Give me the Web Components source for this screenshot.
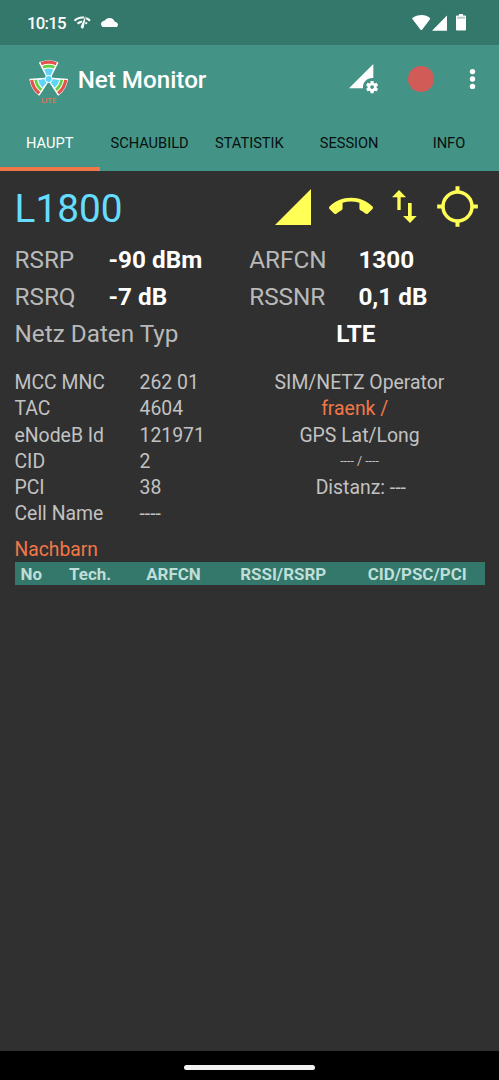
<!DOCTYPE html>
<html lang="de">
<head>
<meta charset="utf-8">
<title>Net Monitor</title>
<style>
html,body{margin:0;height:100%;background:#303030}
body{font-family:Roboto,"Noto Sans",sans-serif;overflow:hidden}
</style>
</head>
<body>
<net-monitor></net-monitor>
<script>
function define(name, html) {
  const t = document.createElement('template');
  t.innerHTML = html;
  customElements.define(name, class extends HTMLElement {
    constructor() {
      super();
      this.attachShadow({ mode: 'open' }).appendChild(t.content.cloneNode(true));
    }
  });
}

define('status-bar', `
<style>
:host{display:flex;height:45px;box-sizing:border-box;padding:0 33.5px 0 27px;background:#34786b;color:#fff;align-items:flex-start}
.time{font:500 16.8px/20px Roboto,sans-serif;margin-top:13px;width:46px;letter-spacing:-.75px;white-space:nowrap}
svg{fill:#fff;display:block;flex:none}
.grow{flex:1}
</style>
<span class="time">10:15</span>
<svg style="margin-top:13.3px" width="18.5" height="18.5" viewBox="0 0 24 24"><path d="M15.9 5c-.17 0-.32.09-.41.23l-.07.15-5.18 11.65c-.16.29-.26.61-.26.96 0 1.11.9 2.01 2.01 2.01.96 0 1.77-.68 1.96-1.59l.01-.03L16.4 5.5c0-.28-.22-.5-.5-.5zM1 9l2 2c2.88-2.88 6.79-4.08 10.53-3.62l1.19-2.68C9.89 3.84 4.74 5.27 1 9zm20 2l2-2c-1.64-1.64-3.55-2.82-5.59-3.57l-.53 2.82c1.5.62 2.9 1.53 4.12 2.75zm-4 4l2-2c-.8-.8-1.7-1.42-2.66-1.89l-.55 2.92c.42.27.83.59 1.21.97zM5 13l2 2c1.13-1.13 2.56-1.79 4.03-2l1.28-2.88c-2.63-.08-5.3.87-7.31 2.88z"/></svg>
<svg style="margin:17.5px 0 0 9px" width="17" height="9.8" viewBox="0 4 24 16" preserveAspectRatio="none"><path d="M19.35 10.04C18.67 6.59 15.64 4 12 4 9.11 4 6.6 5.64 5.35 8.04 2.34 8.36 0 10.91 0 14c0 3.31 2.69 6 6 6h13c2.76 0 5-2.24 5-5 0-2.64-2.05-4.78-4.65-4.96z"/></svg>
<span class="grow"></span>
<svg style="margin-top:14.7px" width="18.6" height="15.8" viewBox=".36 3 23.28 18.5" preserveAspectRatio="none"><path d="M12.01 21.49L23.64 7c-.45-.34-4.93-4-11.64-4C5.28 3 .81 6.66.36 7l11.63 14.49.01.01.01-.01z"/></svg>
<svg style="margin:14.8px 0 0 1.3px" width="15.6" height="15.8" viewBox="0 0 10 10" preserveAspectRatio="none"><path d="M0 10L10 0V10z"/></svg>
<svg style="margin:14.2px 0 0 8.3px" width="10" height="16.4" viewBox="0 0 10 16.4"><path d="M3 0h4v1.6h2q1 0 1 1v12.8q0 1-1 1H1q-1 0-1-1V2.600q0-1 1-1h2z"/><path fill="#b3cec9" d="M1 2.700h8v2H1z"/></svg>
`);

define('app-logo', `
<style>
:host{display:block;width:40px;height:44px}
svg{display:block;overflow:visible}
text{font:500 7.4px Roboto,sans-serif;fill:#e2774e;letter-spacing:.15px}
</style>
<svg width="40" height="44" viewBox="-20 -20 40 44">
<defs><g id="blade">
<path d="M-2 -3L-8.700 -16.200Q0 -19.600 8.700 -16.200L2 -3Z" fill="#fff" stroke="#fff" stroke-width="1.800" stroke-linejoin="round"/>
<path d="M-7.600 -15.300Q0 -18.300 7.600 -15.300" fill="none" stroke="#e4524d" stroke-width="3.200"/>
<path d="M-5.700 -11.700Q0 -14 5.700 -11.700" fill="none" stroke="#63cf40" stroke-width="2.800"/>
<path d="M-1.800 -3L-4.500 -9.600Q0 -11.200 4.500 -9.600L1.800 -3Z" fill="#5fd4f6"/>
</g></defs>
<g transform="translate(-.3 0)"><use href="#blade"/><use href="#blade" transform="rotate(120)"/><use href="#blade" transform="rotate(240)"/>
<circle r="3.600" fill="#5fd4f6" stroke="#fff" stroke-width="1"/>
<text x="0" y="23.600" text-anchor="middle">LITE</text></g>
</svg>`);

define('app-bar', `
<style>
:host{display:flex;height:70px;box-sizing:border-box;padding:0 23px 0 28.500px;background:#439486;align-items:center;color:#fff}
app-logo{margin-top:1px}
h1{flex:1;margin:0 0 0 9.200px;font:500 24.200px/30px Roboto,sans-serif;white-space:nowrap}
svg{display:block;flex:none;margin-top:-2px}
</style>
<app-logo></app-logo>
<h1><slot></slot></h1>
<svg style="margin-right:30px" width="29.200" height="29.200" viewBox="0 0 24 24" fill="#fff"><path d="M18.990 11.500c.34 0 .67.03 1 .07L20 0 0 20h11.560c-.04-.33-.07-.66-.07-1 0-4.140 3.360-7.500 7.500-7.500zm3.710 7.990c.02-.16.04-.32.04-.49 0-.17-.01-.33-.04-.49l1.060-.83c.09-.08.12-.21.06-.32l-1-1.730c-.06-.11-.19-.15-.31-.11l-1.240.5c-.26-.2-.54-.37-.85-.49l-.19-1.320c-.01-.12-.12-.21-.24-.21h-2c-.12 0-.23.09-.25.21l-.19 1.320c-.3.13-.59.29-.85.49l-1.240-.5c-.11-.04-.24 0-.31.11l-1 1.730c-.06.11-.04.24.06.32l1.060.83c-.02.16-.03.32-.03.49 0 .17.01.33.03.49l-1.060.83c-.09.08-.12.21-.06.32l1 1.730c.06.11.19.15.31.11l1.240-.5c.26.2.54.37.85.49l.19 1.320c.02.12.12.21.25.21h2c.12 0 .23-.09.25-.21l.19-1.320c.3-.13.59-.29.84-.49l1.250.5c.11.04.24 0 .31-.11l1-1.730c.06-.11.03-.24-.06-.32l-1.070-.83zm-3.710 1.010c-.83 0-1.500-.67-1.500-1.500s.67-1.500 1.500-1.500 1.500.67 1.500 1.500-.67 1.500-1.500 1.500z"/></svg>
<svg style="margin-right:34.700px" width="26" height="26" viewBox="0 0 26 26"><circle cx="13" cy="13" r="13" fill="#d05b57"/></svg>
<svg width="7" height="22" viewBox="0 0 7 22" fill="#fff"><circle cx="3.500" cy="3.600" r="2.700"/><circle cx="3.500" cy="11" r="2.700"/><circle cx="3.500" cy="18.400" r="2.700"/></svg>
`);

define('app-tab', `
<style>
:host{display:flex;flex:1 1 0;align-items:center;justify-content:center;box-sizing:border-box;height:56px;padding:3px .300px 0 0;border-bottom:4px solid transparent;font-size:14.600px;color:#06100e;white-space:nowrap}
:host([active]){color:#fff;border-bottom-color:#f27748}
</style><slot></slot>`);

define('tab-strip', `<style>:host{display:flex;height:56px;background:#439486}</style><slot></slot>`);

define('cell-icons', `
<style>
:host{display:flex;align-items:center;height:46px;color:#ffff55}
svg{display:block;fill:currentColor;flex:none}
</style>
<svg style="margin-top:-2px" width="36" height="36" viewBox="0 0 36 36"><path d="M0 36L36 0V36z"/></svg>
<svg style="margin:-2.600px 0 0 18px" width="44" height="44" viewBox="0 0 24 24"><path d="M12 9c-1.600 0-3.150.25-4.600.72v3.100c0 .39-.23.74-.56.9-.98.49-1.870 1.120-2.660 1.850-.18.18-.43.28-.7.28-.28 0-.53-.11-.71-.29L.29 13.080c-.18-.17-.29-.42-.29-.7 0-.28.11-.53.29-.71C3.340 8.780 7.460 7 12 7s8.660 1.780 11.710 4.670c.18.18.29.43.29.71 0 .28-.11.53-.29.71l-2.480 2.480c-.18.18-.43.29-.71.29-.27 0-.52-.11-.7-.28-.79-.74-1.690-1.360-2.670-1.850-.33-.16-.56-.5-.56-.9v-3.100C15.150 9.250 13.600 9 12 9z"/></svg>
<svg style="margin:-2.600px 0 0 19px" width="24.700" height="33" viewBox="396 45 74 99"><path d="M417 45L438 67H422V105H412V67H396zM444 84H455V123H470L450 144L429 123H444z"/></svg>
<svg style="margin:-2.600px 0 0 20.300px" width="41" height="41" viewBox="-61.500 -61.500 123 123"><circle r="43.500" fill="none" stroke="currentColor" stroke-width="10.500"/><path d="M-6-61H6V-44H-6zM-6 44H6V61H-6zM-61-6H-44V6H-61zM44-6H61V6H44z"/></svg>
`);

define('metric-row', `
<style>
:host{display:grid;grid-template-columns:94px 140.700px 109.200px 1fr;height:37.100px;align-items:center;font-size:24.300px;line-height:37px;color:#b9b9b9;white-space:nowrap}
:host([wide]){grid-template-columns:321.700px 1fr}
::slotted(b){font-weight:700;color:#fff}
</style><slot></slot>`);

define('info-grid', `
<style>
:host{display:grid;grid-template-columns:125px 1fr;grid-auto-rows:26.250px;font-size:19.400px;line-height:26.250px;color:#c2c2c2;white-space:nowrap}
</style><slot></slot>`);

define('info-center', `
<style>
:host{display:grid;grid-auto-rows:26.250px;font-size:19.400px;line-height:26.250px;color:#c2c2c2;text-align:center;white-space:pre}
::slotted(.accent){color:#f27748}
::slotted(.small){font-size:12.400px;line-height:24px}
::slotted(.distance){padding-left:2.500px}
</style><slot></slot>`);

define('neighbor-table', `
<style>
:host{display:block;color:#bfded8}
.title{font-size:19.300px;line-height:24px;color:#f27748}
.head{display:grid;grid-template-columns:48.500px 77.200px 94px 127.500px 1fr;padding-left:6px;height:22.700px;line-height:24px;background:#34786b;font-size:16.950px;font-weight:700;white-space:nowrap}
</style>
<div class="title"><slot name="title"></slot></div>
<div class="head"><slot></slot></div>`);

define('nav-pill', `
<style>:host{display:flex;justify-content:center;height:29px;background:#000;box-sizing:border-box;padding-top:14.200px}
i{width:131px;height:5px;border-radius:3px;background:#f2f2f2}</style><i></i>`);

define('net-monitor', `
<style>
:host{display:flex;flex-direction:column;height:1080px;background:#303030}
main{flex:1;padding:14px 14.500px 0}
.top{display:flex;justify-content:space-between;height:46px;align-items:center;padding-right:6.300px;margin-bottom:9.600px}
.band{font-size:38.800px;line-height:46px;padding-top:2px;color:#66ddff}
.cols{display:grid;grid-template-columns:220px 1fr;margin:18.200px 0 10.500px}
</style>
<status-bar></status-bar>
<app-bar>Net Monitor</app-bar>
<tab-strip><app-tab active>HAUPT</app-tab><app-tab>SCHAUBILD</app-tab><app-tab>STATISTIK</app-tab><app-tab>SESSION</app-tab><app-tab>INFO</app-tab></tab-strip>
<main>
<div class="top"><span class="band">L1800</span><cell-icons></cell-icons></div>
<metric-row><span>RSRP</span><b>-90 dBm</b><span>ARFCN</span><b>1300</b></metric-row>
<metric-row><span>RSRQ</span><b>-7 dB</b><span>RSSNR</span><b>0,1 dB</b></metric-row>
<metric-row wide><span>Netz Daten Typ</span><b>LTE</b></metric-row>
<div class="cols">
<info-grid><span>MCC MNC</span><span>262 01</span><span>TAC</span><span>4604</span><span>eNodeB Id</span><span>121971</span><span>CID</span><span>2</span><span>PCI</span><span>38</span><span>Cell Name</span><span>----</span></info-grid>
<info-center><span>SIM/NETZ Operator</span><span class="accent">fraenk /&nbsp;&nbsp;</span><span>GPS Lat/Long</span><span class="small">---- / ----</span><span class="distance">Distanz: ---</span></info-center>
</div>
<neighbor-table><span slot="title">Nachbarn</span><span>No</span><span>Tech.</span><span>ARFCN</span><span>RSSI/RSRP</span><span>CID/PSC/PCI</span></neighbor-table>
</main>
<nav-pill></nav-pill>
`);
</script>
</body>
</html>
